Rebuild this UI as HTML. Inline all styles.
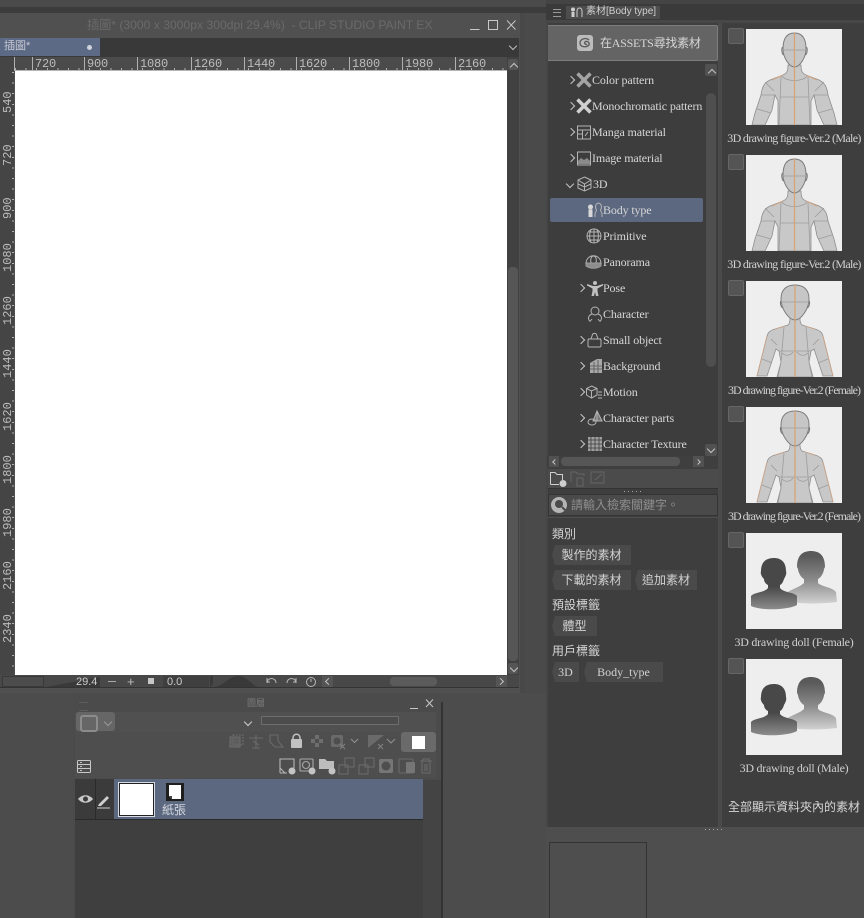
<!DOCTYPE html>
<html><head><meta charset="utf-8">
<style>
html,body{margin:0;padding:0;background:#4a4a4a}
#p{position:relative;width:864px;height:918px;overflow:hidden;background:#4c4c4c;font-family:"Liberation Serif","Noto Sans CJK TC",serif;color:#d4d4d4}
#p div,#p span,#p svg{position:absolute}
.b{background:#3c3c3c}
.cj{font-family:"Liberation Sans","Noto Sans CJK TC",sans-serif;white-space:nowrap}
.rt{top:57px;height:14px;font:12px/15px "Liberation Mono","Noto Sans CJK TC",monospace;color:#bdbdbd;letter-spacing:-.2px;border-left:1px solid #b0b0b0;padding-left:2px;white-space:nowrap}
.rl{left:-9px;width:34px;height:12px;font:12px/12px "Liberation Mono",monospace;color:#bdbdbd;transform:rotate(-90deg);text-align:left;white-space:nowrap}
.t{font-size:12px;line-height:14px;color:#d6d6d6;white-space:nowrap;letter-spacing:-.13px}
.ar{width:5px;height:5px;border-top:1px solid #c4c4c4;border-right:1px solid #c4c4c4;transform:rotate(45deg)}
.ic{width:16px;height:16px;fill:none;stroke:#b4b4b4;stroke-width:1}
.th{left:746px;width:96px;height:96px;background:#eeeeee;overflow:hidden}
.cb{left:728px;width:14px;height:14px;background:#545454;border:1px solid #666;border-radius:2px}
.lb{left:714px;width:160px;text-align:center;font-size:12px;line-height:14px;color:#d0d0d0;white-space:nowrap}
.lf{letter-spacing:-.66px}
.lg{letter-spacing:-1px}
.ld{letter-spacing:-.25px}
.tag{height:20px;background:#4a4a4a;color:#d2d2d2;font:12px/21px "Liberation Sans","Noto Sans CJK TC",sans-serif;text-align:center;white-space:nowrap;clip-path:polygon(3px 0,100% 0,100% 100%,3px 100%,0 50%)}
.h{font:12px/14px "Liberation Sans","Noto Sans CJK TC",sans-serif;color:#d6d6d6;left:552px;white-space:nowrap}
.sq{background:#515151;border-radius:2px}
</style></head><body>
<div id="p">
<svg width="0" height="0" style="left:0;top:0"><defs>
<symbol id="fig" viewBox="0 0 96 96">
<path d="M6 96L9 84L15 66C16 58 18 54 24 51L37 46C41 44 42 42 42 36H55C55 42 56 44 60 46L73 51C79 54 81 58 82 66L88 84L91 96H78L71 81L68 66L65 72V96H32V72L29 66L26 81L19 96Z" fill="#c8c8c8" stroke="#8e8e8e" stroke-width=".8"/>
<path d="M37 20C37 8 42 4 48.500 4C55 4 60 8 60 20C60 28 54 38 48.500 38C43 38 37 28 37 20Z" fill="#c6c6c6" stroke="#7c7c7c"/>
<path d="M36.500 18C35 20 36 25 37.500 26M60.500 18C62 20 61 25 59.500 26" fill="none" stroke="#777"/>
<path d="M37 21H60M36 47C40 53 57 53 61 47M34 68H63M35 48L33 96M62 48L64 96M15 66L29 66M68 66L82 66M11 80L25 84M86 80L72 84M19 53L28 62M78 53L69 62" fill="none" stroke="#9c9c9c" stroke-width=".8"/>
<path d="M48.500 4V96" stroke="#d9a270" stroke-width="1.200"/>
<path d="M26 51L37 46M71 51L60 46" stroke="#cfa484" stroke-width="1"/>
</symbol>
<symbol id="figf" viewBox="0 0 96 96">
<path d="M11 95L21 55C22 51 25 49 29 48L42 44C44 42 44 40 44 36H54C54 40 54 42 56 44L69 48C73 49 76 51 77 55L87 95H77L68 68L65 70L63 81L67 96H31L35 81L33 70L30 68L21 95Z" fill="#c8c8c8" stroke="#8e8e8e" stroke-width=".8"/>
<path d="M35 18C35 8 41 4 49 4C57 4 63 8 63 18C63 28 55 39 49 39C43 39 35 28 35 18Z" fill="#c6c6c6" stroke="#7c7c7c"/>
<path d="M34.500 20C34 23 35 26 36.500 27M63.500 20C64 23 63 26 61.500 27" fill="none" stroke="#777"/>
<path d="M35 21H63M33 70H65M38 46L35 81L32 96M60 46L63 81L66 96M25 58L31 64M73 58L67 64M16 78L26 82M82 78L72 82M36 72C40 76 45 74 47 71M62 72C58 76 53 74 51 71" fill="none" stroke="#9c9c9c" stroke-width=".8"/>
<path d="M49 4V96" stroke="#d9a270" stroke-width="1.200"/>
<path d="M29 48L39 45M69 48L59 45M21 55L11 95M77 55L87 95" fill="none" stroke="#cfa484" stroke-width=".8"/>
</symbol>
<linearGradient id="g1" gradientUnits="userSpaceOnUse" x1="0" y1="25" x2="0" y2="77"><stop offset=".55" stop-color="#484848"/><stop offset="1" stop-color="#8f8f8f"/></linearGradient>
<linearGradient id="g2" gradientUnits="userSpaceOnUse" x1="0" y1="18" x2="0" y2="70"><stop offset=".1" stop-color="#5a5a5a"/><stop offset=".55" stop-color="#8a8a8a"/><stop offset="1" stop-color="#d0d0d0"/></linearGradient>
<symbol id="doll" viewBox="0 0 96 96">
<path d="M40 60C46 56 54 54 58 50V46C54 44 52 38 52 36L51 34C51 22 57 18 65 18C73 18 79 22 79 34L78 36C78 38 76 44 72 46V50C76 54 86 54 90 59L91 69C76 71 56 71 46 69Z" fill="url(#g2)"/>
<path d="M15 38C15 29 20 25 28 25C35 25 40 29 40 38C41 41 39 44 38 46C37 49 36 51 34 52V55C38 60 48 59 51 63V72C42 77 16 78 5 73V63C8 59 18 60 22 55V52C20 51 18 49 18 46C16 44 14 41 15 38Z" fill="url(#g1)"/>
</symbol>
</defs></svg>

<!-- top bars -->
<div style="left:0;top:0;width:864px;height:7px;background:#4a4a4a"></div>
<div class="b" style="left:0;top:7px;width:864px;height:6px"></div>

<!-- canvas window -->
<div style="left:0;top:13px;width:525px;height:680px;background:#505050"></div>
<div style="left:520px;top:13px;width:5px;height:680px;background:#484848"></div>
<div class="cj" style="left:87px;top:17px;font-size:12.15px;line-height:16px;color:#6a6a6a">插圖* (3000 x 3000px 300dpi 29.4%)&nbsp; - CLIP STUDIO PAINT EX</div>
<svg style="left:468px;top:17px" width="50" height="16" fill="none" stroke="#c8c8c8" stroke-width="1"><path d="M2 12.500H11.500"/><rect x="20.500" y="3.500" width="9" height="9"/><path d="M39 3.500L47.500 12.500M47.500 3.500L39 12.500"/></svg>
<div class="b" style="left:0;top:38px;width:519px;height:19px;background:#393939"></div>
<div style="left:0;top:38px;width:100px;height:18px;background:#5d6a85"></div>
<div class="cj" style="left:4px;top:39px;font-size:11px;line-height:14px;color:#c6cad4">插圖*</div>
<div style="left:87px;top:45px;width:5px;height:5px;border-radius:50%;background:#cfd3db"></div>
<div class="ar" style="left:510px;top:43px;transform:rotate(135deg);border-color:#bbb"></div>

<div style="left:0;top:57px;width:507px;height:14px;background:#4b4b4b;border-bottom:1px solid #b5b5b5;box-sizing:border-box"></div>
<div style="left:0;top:57px;width:14px;height:618px;background:#454545"></div>
<div style="left:14px;top:57px;width:1px;height:14px;background:#b0b0b0"></div>
<div style="left:15px;top:68px;width:492px;height:2px;background:repeating-linear-gradient(90deg,#b0b0b0 0 1px,transparent 1px 10.6px)"></div>
<div style="left:12px;top:72px;width:2px;height:603px;background:repeating-linear-gradient(180deg,#b0b0b0 0 1px,transparent 1px 10.6px)"></div>
<span class="rt" style="left:32px">720</span><span class="rt" style="left:84px">900</span><span class="rt" style="left:137px">1080</span><span class="rt" style="left:191px">1260</span><span class="rt" style="left:244px">1440</span><span class="rt" style="left:296px">1620</span><span class="rt" style="left:349px">1800</span><span class="rt" style="left:402px">1980</span><span class="rt" style="left:455px">2160</span>
<span class="rl" style="top:90px">540</span><span class="rl" style="top:143px">720</span><span class="rl" style="top:196px">900</span><span class="rl" style="top:249px">1080</span><span class="rl" style="top:302px">1260</span><span class="rl" style="top:355px">1440</span><span class="rl" style="top:408px">1620</span><span class="rl" style="top:461px">1800</span><span class="rl" style="top:514px">1980</span><span class="rl" style="top:567px">2160</span><span class="rl" style="top:620px">2340</span>
<div style="left:15px;top:71px;width:492px;height:604px;background:#fff"></div>
<!-- canvas scrollbar -->
<div style="left:507px;top:57px;width:12px;height:618px;background:#414141"></div>
<div class="sq" style="left:508px;top:59px;width:10px;height:11px;background:#555"></div>
<div class="ar" style="left:511px;top:64px;transform:rotate(-45deg)"></div>
<div style="left:508px;top:267px;width:10px;height:394px;background:#565656;border-radius:4px"></div>
<div class="sq" style="left:508px;top:663px;width:10px;height:11px;background:#555"></div>
<div class="ar" style="left:511px;top:665px;transform:rotate(135deg)"></div>
<!-- status -->
<div style="left:0;top:675px;width:519px;height:13px;background:#484848;border-bottom:1px solid #333;box-sizing:border-box"></div>
<div style="left:2px;top:676px;width:42px;height:11px;background:#4c4c4c;border:1px solid #393939;box-sizing:border-box"></div>
<svg style="left:46px;top:676px" width="54" height="11"><path d="M0 11L54 1V11Z" fill="#393939"/></svg>
<div class="cj" style="left:76px;top:675px;font-size:11px;line-height:14px;color:#ccc">29.4</div>
<div style="left:108px;top:681px;width:8px;height:1px;background:#aaa"></div>
<div class="cj" style="left:127px;top:674px;font-size:13px;line-height:15px;color:#bbb">+</div>
<div style="left:148px;top:678px;width:6px;height:6px;background:#c6c6c6"></div>
<div style="left:163px;top:676px;width:46px;height:11px;background:#3f3f3f"></div>
<div class="cj" style="left:167px;top:675px;font-size:11px;line-height:14px;color:#ccc">0.0</div>
<svg style="left:210px;top:676px" width="50" height="11"><path d="M0 11L3 8V0H0Z M3 11C14 11 18 0 28 0C38 0 42 11 50 11Z" fill="#393939"/></svg>
<svg style="left:264px;top:675px" width="56" height="13" fill="none" stroke="#b8b8b8"><path d="M3 8C3 2 12 2 12 8M3 3V7H6"/><path d="M23 8C23 2 32 2 32 8M32 3V7H29"/><circle cx="47" cy="7" r="4.500"/><path d="M47 4V7"/></svg>
<div style="left:322px;top:676px;width:11px;height:11px;background:#555"></div>
<div class="ar" style="left:326px;top:679px;transform:rotate(-135deg);width:4px;height:4px"></div>
<div style="left:390px;top:677px;width:47px;height:9px;background:#5b5b5b;border-radius:4px"></div>
<div style="left:496px;top:676px;width:11px;height:11px;background:#555"></div>
<div class="ar" style="left:498px;top:679px;width:4px;height:4px"></div>

<!-- layer panel -->
<div style="left:0;top:693px;width:546px;height:225px;background:#4c4c4c"></div>
<div style="left:73px;top:693px;width:368px;height:225px;background:#4b4b4b"></div>
<div style="left:441px;top:702px;width:2px;height:216px;background:#333"></div>
<div style="left:79px;top:702px;width:9px;height:7px;border-top:1px solid #5c5c5c;border-bottom:1px solid #5c5c5c"></div>
<div class="cj" style="left:247px;top:698px;font-size:9px;line-height:11px;color:#7d7d7d">圖層</div>
<svg style="left:408px;top:697px" width="30" height="14" fill="none" stroke="#c6c6c6"><path d="M2 11.500H10"/><path d="M18 2.500L25 10M25 2.500L18 10"/></svg>
<div style="left:75px;top:712px;width:361px;height:20px;background:#505050"></div>
<div style="left:76px;top:712px;width:39px;height:19px;background:#666;border-radius:3px"></div>
<div style="left:80px;top:715px;width:14px;height:13px;border:2px solid #8c8c8c;border-radius:3px"></div>
<div class="ar" style="left:105px;top:719px;transform:rotate(135deg);border-color:#999"></div>
<div class="ar" style="left:245px;top:719px;transform:rotate(135deg);border-color:#ccc"></div>
<div style="left:261px;top:716px;width:136px;height:7px;background:#4c4c4c;border:1px solid #6e6e6e;border-radius:1px"></div>
<div style="left:75px;top:732px;width:361px;height:46px;background:#4e4e4e"></div>
<div style="left:401px;top:732px;width:35px;height:20px;background:#6a6a6a;border-radius:3px"></div>
<div style="left:412px;top:736px;width:13px;height:13px;background:#fff"></div>
<svg style="left:225px;top:730px" width="215" height="50" fill="none" stroke="#6a6a6a" stroke-width="1.100">
<rect x="5" y="7" width="10" height="10" fill="#5e5e5e"/><rect x="8" y="5" width="10" height="10" stroke-dasharray="2 1"/>
<path d="M24 8H38M31 5V18M27 18H35M28 11L34 15"/>
<path d="M45 5H53V11L58 17H50L45 12Z"/>
<path d="M68 10V8C68 3 75 3 75 8V10" stroke="#c2c2c2" stroke-width="1.500"/><rect x="66" y="9" width="11" height="9" rx="1" fill="#c2c2c2" stroke="none"/>
<path d="M90 5h4v4h-4zM94 9h4v4h-4zM90 13h4v4h-4zM86 9h4v4h-4z" fill="#6e6e6e" stroke="none"/>
<rect x="106" y="5" width="12" height="12" rx="2" fill="#6a6a6a" stroke="none"/><circle cx="112" cy="11" r="3.500" fill="#4e4e4e" stroke="none"/><path d="M115 14L120 19M120 14L115 19" stroke="#808080"/>
<path d="M126 9L129.500 12.500L133 9" stroke="#909090"/>
<path d="M143 18V5L159 5L143 18Z" fill="#6a6a6a" stroke="none"/><path d="M153 14L158 19M158 14L153 19" stroke="#808080"/>
<path d="M162 9L166 13L170 9" stroke="#909090"/>
<path d="M55 43V29H69V38M55 43H62M55 38L60 43" stroke="#b6b6b6"/><circle cx="67" cy="41" r="3.500" fill="#c4c4c4" stroke="none"/>
<rect x="75" y="29" width="13" height="12" rx="1" stroke="#a8a8a8"/><circle cx="81" cy="35" r="3.500" stroke="#a8a8a8"/><circle cx="87" cy="41" r="3.500" fill="#c4c4c4" stroke="none"/>
<path d="M94 29H100L102 31H109V39H94Z" fill="#bdbdbd" stroke="none"/><circle cx="107" cy="41" r="3.500" fill="#c4c4c4" stroke="none"/>
<rect x="120" y="28" width="9" height="9"/><rect x="114" y="35" width="9" height="9"/>
<rect x="140" y="28" width="9" height="9"/><rect x="134" y="35" width="9" height="9"/>
<rect x="154" y="29" width="14" height="14" rx="2" fill="#767676" stroke="none"/><circle cx="161" cy="36" r="4.500" fill="#4e4e4e" stroke="none"/>
<rect x="174" y="29" width="14" height="14" rx="1"/><rect x="181" y="32" width="9" height="11" rx="1" fill="#767676" stroke="none"/>
<path d="M195 31H207M198 31V29H204V31M197 31V43H205V31M200 34V41M202 34V41"/></svg>
<svg style="left:77px;top:760px" width="15" height="14" fill="none" stroke="#c8c8c8"><rect x=".5" y=".5" width="13" height="12" rx="1"/><path d="M.5 4.500H13.500M.5 8.500H13.500M3 2.500H5M3 6.500H5M3 10.500H5"/></svg>
<div style="left:75px;top:779px;width:348px;height:40px;background:#3b3b3b"></div>
<div style="left:95px;top:779px;width:1px;height:40px;background:#2a2a2a"></div>
<div style="left:114px;top:779px;width:309px;height:40px;background:#5c6880"></div>
<div style="left:75px;top:819px;width:348px;height:1px;background:#2a2a2a"></div>
<div style="left:423px;top:780px;width:18px;height:138px;background:#444"></div>
<div style="left:75px;top:820px;width:348px;height:98px;background:#3f3f3f"></div>
<div style="left:119px;top:783px;width:33px;height:31px;background:#fff;border:1px solid #222;outline:1px solid #d6dae2"></div>
<svg style="left:78px;top:794px" width="15" height="10"><path d="M0 5C4 0 11 0 15 5C11 10 4 10 0 5Z" fill="#c8c8c8"/><circle cx="7.500" cy="5" r="2.500" fill="#3b3b3b"/></svg>
<svg style="left:96px;top:794px" width="15" height="16"><path d="M3 10L11 2L13 4L5 12L2 12Z" fill="#cfcfcf"/><path d="M1 14H14" stroke="#cfcfcf"/></svg>
<svg style="left:166px;top:783px" width="18" height="18"><rect width="18" height="18" fill="#1e1e1e"/><path d="M3 2H15V16H6L3 13Z" fill="#fff"/><path d="M3 13H6V16Z" fill="#444"/></svg>
<div class="cj" style="left:162px;top:803px;font-size:12px;line-height:14px;color:#d4d8e0">紙張</div>

<!-- right side -->
<div style="left:525px;top:13px;width:21px;height:680px;background:#4a4a4a"></div>
<div style="left:546px;top:0;width:318px;height:918px;background:#3e3e3e"></div>
<div style="left:546px;top:0;width:318px;height:5px;background:#444"></div>
<div style="left:546px;top:4px;width:318px;height:16px;background:#3a3a3a"></div>
<div style="left:553px;top:9px;width:8px;height:6px;border-top:1px solid #999;border-bottom:1px solid #999"></div>
<div style="left:553px;top:12px;width:8px;height:1px;background:#999"></div>
<div style="left:566px;top:6px;width:94px;height:13px;background:#4d4d4d"></div>
<svg style="left:570px;top:7px" width="14" height="11" fill="none" stroke="#cfcfcf"><circle cx="3" cy="2.500" r="2" fill="#cfcfcf" stroke="none"/><rect x="1.500" y="5" width="3" height="5" fill="#cfcfcf" stroke="none"/><path d="M7 10V4C7 0 12 0 12 4V10"/></svg>
<div class="cj" style="left:586px;top:5px;font-size:10px;line-height:14px;color:#cfcfcf">素材[Body type]</div>
<div style="left:546px;top:20px;width:318px;height:3px;background:#474747"></div>
<div style="left:547px;top:25px;width:169px;height:34px;background:#646464;border:1px solid #7d7d7d;border-radius:2px"></div>
<svg style="left:577px;top:35px" width="16" height="16"><rect width="16" height="16" rx="3" fill="#bcbcbc"/><path d="M12 5C9 2 3 4 3 8C3 12 9 13 12 10C13 8 10 5 8 7C7 8 8 10 10 9" fill="none" stroke="#5a5a5a" stroke-width="1.300"/></svg>
<div style="left:600px;top:35px;font-size:12px;line-height:16px;letter-spacing:-.25px;font-family:'Liberation Serif','Noto Sans CJK TC',serif;color:#d6d6d6;white-space:nowrap">在ASSETS尋找素材</div>

<!-- tree -->
<div style="left:547px;top:62px;width:171px;height:393px;background:#3d3d3d"></div>
<div style="left:718px;top:23px;width:4px;height:805px;background:#4a4a4a"></div>
<div style="left:546px;top:20px;width:2px;height:808px;background:#464646"></div>
<div class="sq" style="left:705px;top:64px;width:12px;height:12px"></div>
<div class="ar" style="left:709px;top:70px;transform:rotate(-45deg)"></div>
<div style="left:706px;top:93px;width:10px;height:274px;background:#4f4f4f;border-radius:5px"></div>
<div class="sq" style="left:705px;top:444px;width:12px;height:12px"></div>
<div class="ar" style="left:708px;top:446px;transform:rotate(135deg)"></div>
<div style="left:550px;top:198px;width:153px;height:24px;background:#5c6880;border-radius:2px"></div>

<div class="ar" style="left:568px;top:77px"></div><div class="ar" style="left:568px;top:103px"></div><div class="ar" style="left:568px;top:129px"></div><div class="ar" style="left:568px;top:155px"></div>
<div class="ar" style="left:567px;top:181px;transform:rotate(135deg)"></div>
<div class="ar" style="left:578px;top:285px"></div><div class="ar" style="left:578px;top:337px"></div><div class="ar" style="left:578px;top:363px"></div><div class="ar" style="left:578px;top:389px"></div><div class="ar" style="left:578px;top:415px"></div><div class="ar" style="left:578px;top:441px"></div>

<svg class="ic" style="left:576px;top:72px" viewBox="0 0 16 16"><path d="M1.500 1.500L14.500 14.500M14.500 1.500L1.500 14.500" stroke="#a4a4a4" stroke-width="3.500"/></svg>
<svg class="ic" style="left:576px;top:98px" viewBox="0 0 16 16"><path d="M1.500 1.500L14.500 14.500M14.500 1.500L1.500 14.500" stroke="#d0d0d0" stroke-width="3.500"/></svg>
<svg class="ic" style="left:577px;top:125px" viewBox="0 0 16 16"><rect x=".5" y="1" width="13" height="13"/><path d="M.5 5H13.500M.5 9H5.500M5.500 5V14M8 11L11 7"/></svg>
<svg class="ic" style="left:577px;top:151px" viewBox="0 0 16 16"><rect x=".5" y="1" width="13" height="13"/><path d="M1 13V10L4 7L7 9L10 7L13 10V13Z" fill="#8a8a8a" stroke="none"/></svg>
<svg class="ic" style="left:577px;top:176px" viewBox="0 0 16 16"><path d="M7.500 1L14 4V12L7.500 15L1 12V4Z"/><path d="M1 4L7.500 8L14 4M7.500 8V15M1 8L7.500 11L14 8" /></svg>
<svg class="ic" style="left:587px;top:202px" viewBox="0 0 16 16"><circle cx="3.500" cy="5" r="2.500" fill="#d8d8d8" stroke="none"/><rect x="1.500" y="7.500" width="4" height="7.500" fill="#d8d8d8" stroke="none"/><path d="M8 15V12C8 10 9.500 10 9.500 8C8 6 8 2 11.500 1C15 2 15 6 13.500 8C13.500 10 15 10 15 12V15"/></svg>
<svg class="ic" style="left:586px;top:228px" viewBox="0 0 16 16"><circle cx="8" cy="8" r="7"/><path d="M1 8H15M8 1V15M3 4H13M3 12H13M5 2C3 6 3 10 5 14M11 2C13 6 13 10 11 14"/></svg>
<svg class="ic" style="left:585px;top:254px;width:17px" viewBox="0 0 17 16"><path d="M1 9H16V12C12 15 5 15 1 12Z" fill="#8d8d8d" stroke="#9a9a9a"/><path d="M1 10C1 -1 16 -1 16 10M6 9C5 4 7 2 8.500 2C10 2 12 4 11 9"/></svg>
<svg class="ic" style="left:587px;top:280px" viewBox="0 0 16 16"><circle cx="8" cy="3" r="2" fill="#c0c0c0" stroke="none"/><path d="M0 4L6 6H10L16 4V5.500L10.500 8.500V11L11.500 16H9L8 12L7 16H4.500L5.500 11V8.500L0 5.500Z" fill="#c0c0c0" stroke="none"/></svg>
<svg class="ic" style="left:587px;top:306px" viewBox="0 0 16 16"><circle cx="8" cy="5" r="4"/><path d="M3 15.500C0 12 2 9 5 8M13 15.500C16 12 14 9 11 8M3 15.500L5 13M13 15.500L11 13"/></svg>
<svg class="ic" style="left:587px;top:332px" viewBox="0 0 16 16"><rect x="1" y="7" width="13" height="8" rx="1.500"/><path d="M4 7L5.500 2.500C6 1 9 1 9.500 2.500L11 7M1 7H14"/></svg>
<svg class="ic" style="left:588px;top:358px" viewBox="0 0 14 16"><path d="M1 5L8 1H13V15H1Z" fill="#a8a8a8" stroke="none"/><path d="M1 8H13M1 11H13M5 4V15M9 2V15" stroke="#555" stroke-width=".8"/></svg>
<svg class="ic" style="left:586px;top:385px" viewBox="0 0 16 16"><path d="M5.500 1L11 3.500V10L5.500 13L.5 10V3.500Z"/><path d="M.5 3.500L5.500 6L11 3.500M5.500 6V13M12 7H16M12 10H16M12 13H16"/></svg>
<svg class="ic" style="left:587px;top:410px" viewBox="0 0 16 16"><path d="M10 1L15 11H6Z" fill="#777"/><path d="M10 1V11"/><ellipse cx="5" cy="12" rx="4" ry="3"/></svg>
<svg class="ic" style="left:587px;top:436px" viewBox="0 0 16 16"><rect x="1" y="1" width="14" height="14" fill="#a0a0a0" stroke="none"/><path d="M1 4H15M1 8H15M1 12H15M4 1V15M8 1V15M12 1V15" stroke="#3d3d3d" stroke-width=".8"/></svg>

<div class="t" style="left:592px;top:73px">Color pattern</div>
<div class="t" style="left:592px;top:99px">Monochromatic pattern</div>
<div class="t" style="left:592px;top:125px">Manga material</div>
<div class="t" style="left:592px;top:151px">Image material</div>
<div class="t" style="left:593px;top:177px">3D</div>
<div class="t" style="left:603px;top:203px">Body type</div>
<div class="t" style="left:603px;top:229px">Primitive</div>
<div class="t" style="left:603px;top:255px">Panorama</div>
<div class="t" style="left:603px;top:281px">Pose</div>
<div class="t" style="left:603px;top:307px">Character</div>
<div class="t" style="left:603px;top:333px">Small object</div>
<div class="t" style="left:603px;top:359px">Background</div>
<div class="t" style="left:603px;top:385px">Motion</div>
<div class="t" style="left:603px;top:411px">Character parts</div>
<div class="t" style="left:603px;top:437px">Character Texture</div>

<!-- h scrollbar + toolbar -->
<div style="left:547px;top:456px;width:171px;height:12px;background:#3f3f3f"></div>
<div style="left:549px;top:456px;width:10px;height:11px;background:#515151"></div>
<div class="ar" style="left:553px;top:460px;width:3px;height:3px;transform:rotate(-135deg)"></div>
<div style="left:561px;top:457px;width:119px;height:9px;background:#565656;border-radius:4px"></div>
<div style="left:693px;top:456px;width:11px;height:11px;background:#515151"></div>
<div class="ar" style="left:696px;top:460px;width:3px;height:3px"></div>
<div style="left:548px;top:469px;width:170px;height:19px;background:#4b4b4b;border-bottom:1px solid #333"></div>
<svg style="left:548px;top:469px" width="60" height="20" fill="none" stroke="#cfcfcf"><path d="M2.500 15.500V3.500H7L9 5.500H14.500V11M2.500 15.500H11"/><circle cx="15" cy="14.500" r="3.500" fill="#cfcfcf" stroke="none"/><g stroke="#666"><path d="M23 13V3H28L30 5H36V7M35 9H29V17H35V9"/><path d="M43 14V3H56V14ZM47 11L54 5"/></g></svg>
<div style="left:624px;top:491px;width:17px;height:1px;background:repeating-linear-gradient(90deg,#a8a8a8 0 1px,transparent 1px 4px)"></div>
<div style="left:548px;top:494px;width:170px;height:22px;background:#4a4a4a;border:1px solid #353535;box-sizing:border-box"></div>
<svg style="left:551px;top:497px" width="16" height="16"><circle cx="8" cy="8" r="8" fill="#b4b4b4"/><circle cx="8" cy="7" r="4" fill="#4a4a4a"/><path d="M11 10L15 14" stroke="#4a4a4a" stroke-width="2"/></svg>
<div class="cj" style="left:571px;top:497px;font-size:12px;line-height:16px;color:#8f8f8f">請輸入檢索關鍵字。</div>
<div style="left:548px;top:517px;width:170px;height:1px;background:#4e4e4e"></div>

<!-- tags -->
<div class="h" style="top:527px">類別</div>
<div class="tag" style="left:552px;top:545px;width:79px">製作的素材</div>
<div class="tag" style="left:552px;top:570px;width:79px">下載的素材</div>
<div class="tag" style="left:635px;top:570px;width:62px">追加素材</div>
<div class="h" style="top:598px">預設標籤</div>
<div class="tag" style="left:552px;top:616px;width:45px">體型</div>
<div class="h" style="top:644px">用戶標籤</div>
<div class="tag" style="left:552px;top:662px;width:27px;font-family:'Liberation Serif',serif">3D</div>
<div class="tag" style="left:584px;top:662px;width:79px;font-family:'Liberation Serif',serif">Body_type</div>

<!-- thumbs -->
<div class="cb" style="top:28px"></div><div class="th" style="top:29px"><svg width="96" height="96"><use href="#fig"/></svg></div>
<div class="lb lf" style="top:131px">3D drawing figure-Ver.2 (Male)</div>
<div class="cb" style="top:154px"></div><div class="th" style="top:155px"><svg width="96" height="96"><use href="#fig"/></svg></div>
<div class="lb lf" style="top:257px">3D drawing figure-Ver.2 (Male)</div>
<div class="cb" style="top:280px"></div><div class="th" style="top:281px"><svg width="96" height="96"><use href="#figf"/></svg></div>
<div class="lb lg" style="top:383px">3D drawing figure-Ver.2 (Female)</div>
<div class="cb" style="top:406px"></div><div class="th" style="top:407px"><svg width="96" height="96"><use href="#figf"/></svg></div>
<div class="lb lg" style="top:509px">3D drawing figure-Ver.2 (Female)</div>
<div class="cb" style="top:532px"></div><div class="th" style="top:533px"><svg width="96" height="96"><use href="#doll"/></svg></div>
<div class="lb ld" style="top:635px">3D drawing doll (Female)</div>
<div class="cb" style="top:658px"></div><div class="th" style="top:659px"><svg width="96" height="96"><use href="#doll"/></svg></div>
<div class="lb ld" style="top:761px">3D drawing doll (Male)</div>
<div class="cj" style="left:728px;top:800px;font-size:12px;line-height:15px;color:#d6d6d6">全部顯示資料夾內的素材</div>

<!-- bottom -->
<div style="left:546px;top:827px;width:318px;height:91px;background:#4e4e4e"></div>
<div style="left:705px;top:829px;width:17px;height:1px;background:repeating-linear-gradient(90deg,#a8a8a8 0 1px,transparent 1px 4px)"></div>
<div style="left:549px;top:842px;width:98px;height:76px;border:1px solid #333;border-bottom:0;box-sizing:border-box"></div>
</div>
</body></html>
